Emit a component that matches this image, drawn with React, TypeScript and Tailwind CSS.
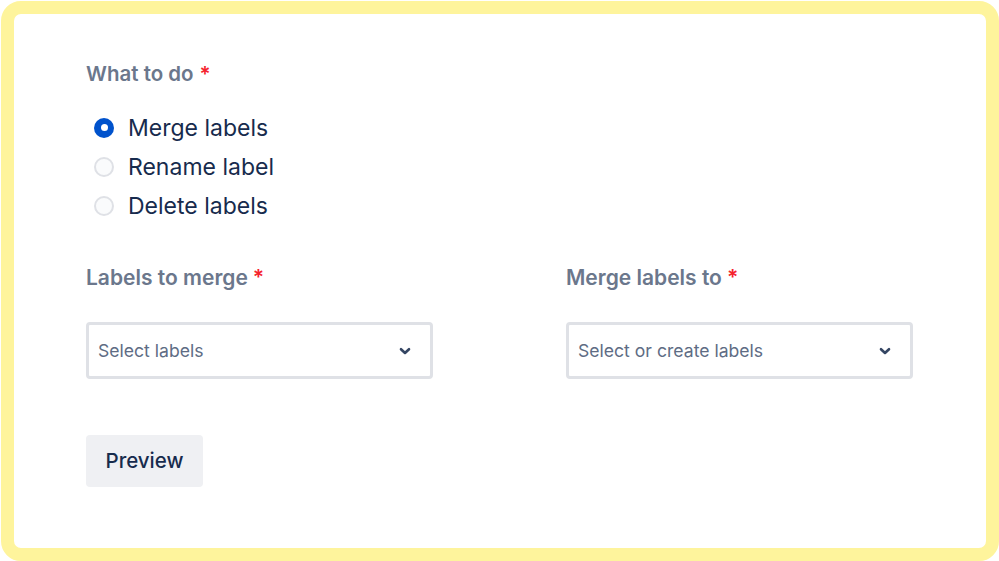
import React from "react";

function Chevron() {
  return (
    <svg width="14" height="14" viewBox="0 0 14 14" fill="none">
      <path d="M3 5.2 7 9 11 5.2" stroke="#344563" strokeWidth="2.6" strokeLinecap="round" strokeLinejoin="round" />
    </svg>
  );
}

function Radio({ checked, label }: { checked?: boolean; label: string }) {
  return (
    <div className="flex items-center h-[39px]">
      <div className="w-[36px] flex justify-center">
        {checked ? (
          <div className="w-[20px] h-[20px] rounded-full bg-[#0052cc] flex items-center justify-center">
            <div className="w-[7px] h-[7px] rounded-full bg-white" />
          </div>
        ) : (
          <div className="w-[20px] h-[20px] rounded-full border-[2.5px] border-[#dfe1e6] bg-[#fafbfc]" />
        )}
      </div>
      <span className="ml-[6px] text-[23px] text-[#172b4d] leading-none pt-[2px]">{label}</span>
    </div>
  );
}

function Field({ label, placeholder }: { label: string; placeholder: string }) {
  return (
    <div className="w-[347px] flex flex-col">
      <div className="h-[24px] flex items-center text-[21px] font-semibold text-[#6b778c]">
        {label}
        <span className="text-[#f5222d] ml-[5px]">*</span>
      </div>
      <div className="mt-[32px] h-[57px] rounded-[4px] border-[3px] border-[#dfe1e6] bg-white flex items-center justify-between pl-[9px] pr-[18px]">
        <span className="text-[17.6px] text-[#5e6c84] pt-[2px]">{placeholder}</span>
        <Chevron />
      </div>
    </div>
  );
}

export default function App() {
  return (
    <div
      className="w-[999px] h-[561px] bg-white"
      style={{ fontFamily: "Inter, 'Noto Sans', sans-serif" }}
    >
      <div className="w-[998px] h-[560px] mt-[1px] ml-[1px] rounded-[20px] border-[13px] border-[#fef49c] bg-white pl-[72px] pt-[48px]">
        <div className="h-[24px] flex items-center text-[20.5px] font-semibold text-[#6b778c]">
          What to do<span className="text-[#f5222d] ml-[6px]">*</span>
        </div>
        <div className="mt-[22px] flex flex-col">
          <Radio checked label="Merge labels" />
          <Radio label="Rename label" />
          <Radio label="Delete labels" />
        </div>
        <div className="mt-[41px] flex gap-[133px]">
          <Field label="Labels to merge" placeholder="Select labels" />
          <Field label="Merge labels to" placeholder="Select or create labels" />
        </div>
        <button className="mt-[56px] w-[117px] h-[52px] rounded-[4px] bg-[#eff0f3] text-[20.5px] font-medium text-[#172b4d] flex items-center justify-center">
          Preview
        </button>
      </div>
    </div>
  );
}
